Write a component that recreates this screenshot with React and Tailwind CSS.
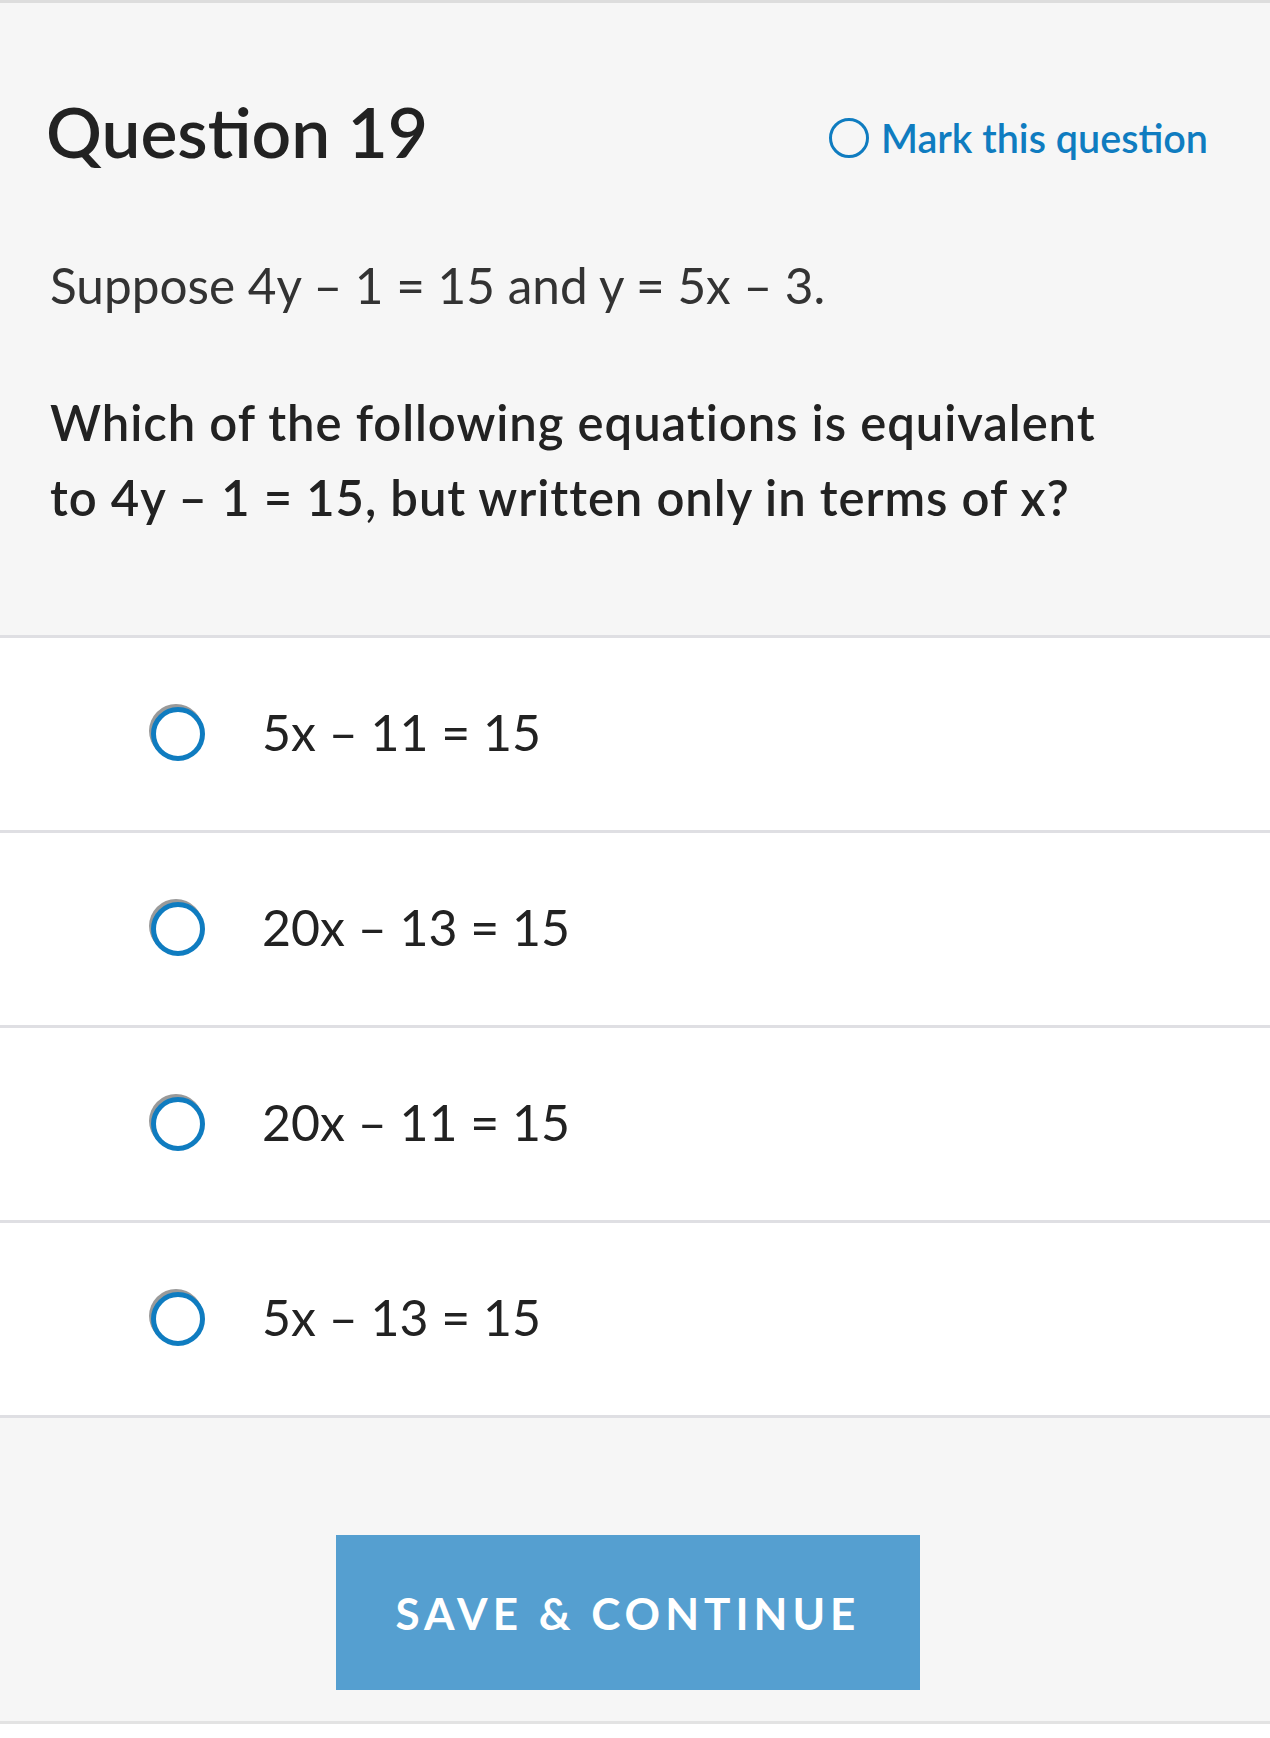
export default function App() {
  const answers = ["5x – 11 = 15", "20x – 13 = 15", "20x – 11 = 15", "5x – 13 = 15"];
  return (
    <div className="w-[1270px] h-[1738px] bg-white" style={{ fontFamily: "Lato, 'Open Sans', sans-serif" }}>
      <div className="bg-[#f6f6f6] border-t-[3px] border-[#dddddd] border-b-[3px] border-b-[#dfdfe3] h-[638px] px-[48px]">
        <div className="flex items-center justify-between pt-[88px] pr-[14px]">
          <h1 className="text-[69.5px] leading-[80px] font-semibold text-[#222222] -ml-[2px]">Question 19</h1>
          <div className="flex items-center gap-[12px] mt-[14px]">
            <span className="block w-[40px] h-[40px] rounded-full border-[3.5px] border-[#0f7cc0]"></span>
            <span className="text-[39.5px] leading-[44px] font-semibold text-[#0f7cc0]">Mark this question</span>
          </div>
        </div>
        <p className="mt-[86px] text-[49.5px] leading-[56px] text-[#333333] pl-[2px]">Suppose 4y – 1 = 15 and y = 5x – 3.</p>
        <p className="mt-[72px] text-[49px] leading-[75px] font-semibold tracking-[0.95px] text-[#222222] pl-[2px]">
          Which of the following equations is equivalent
          <br />
          to 4y – 1 = 15, but written only in terms of x?
        </p>
      </div>
      {answers.map((a) => (
        <div key={a} className="h-[195px] border-b-[3px] border-[#dfdfe3] bg-white flex items-center pl-[151px]">
          <span className="block w-[54px] h-[54px] rounded-full border-[5px] border-[#0f7cc0] bg-white shadow-[-2px_-3px_0_0_#9a9a9a]"></span>
          <span className="ml-[57px] -mt-[4px] text-[50px] leading-[60px] text-[#222222]">{a}</span>
        </div>
      ))}
      <div className="bg-[#f6f6f6] h-[306px] border-b-[3px] border-[#e3e3e3] flex justify-center pt-[117px] pr-[14px]">
        <button className="w-[584px] h-[155px] bg-[#559fd0] text-white text-[44px] font-bold tracking-[5px]">SAVE &amp; CONTINUE</button>
      </div>
    </div>
  );
}
